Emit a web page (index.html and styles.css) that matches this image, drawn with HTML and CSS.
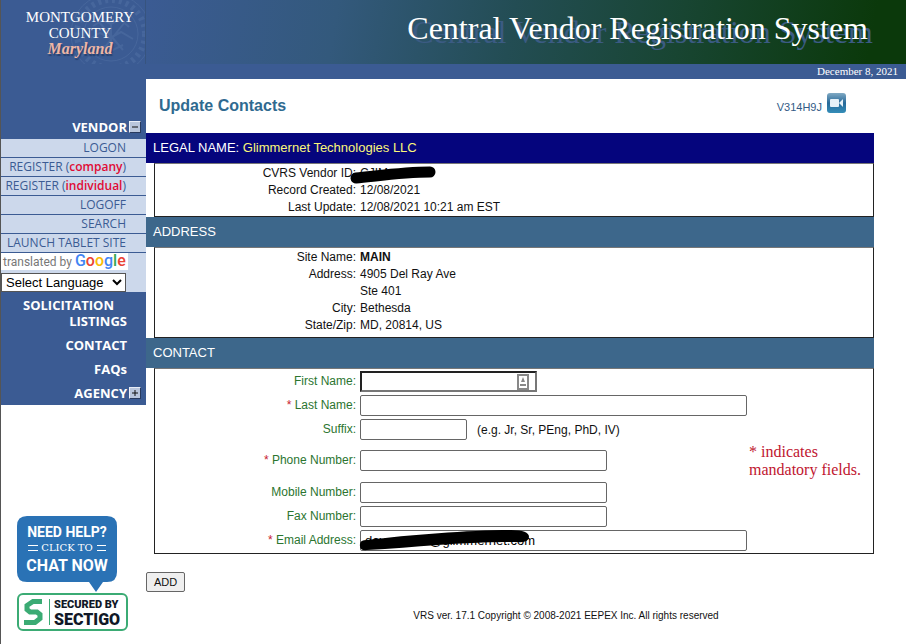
FILE: index.html
```html
<!DOCTYPE html>
<html lang="en">
<head>
    <meta charset="UTF-8">
    <meta name="viewport" content="width=device-width, initial-scale=1.0">
    <title>Central Vendor Registration System</title>
    <link rel="stylesheet" href="styles.css">
</head>
<body>

<div class="page">
    <aside class="sidebar">
        <div class="county">
            <svg class="seal" viewBox="0 0 76 64" aria-hidden="true">
                <g fill="none" stroke="#7594c2">
                    <circle cx="42" cy="34" r="40" stroke-width="1"/>
                    <circle cx="42" cy="34" r="34" stroke-width="6" stroke-dasharray="3 4"/>
                    <circle cx="42" cy="34" r="27" stroke-width="1"/>
                    <path d="M24 26l10-6 8 4 9-5 9 8M22 38l9-5 10 5 11-6 12 7M27 50l9-4 8 4 10-5M42 18v38M30 22l24 28M56 22L32 52" stroke-width="2"/>
                </g>
            </svg>
            <p class="county-name">MONTGOMERY<br>COUNTY<br><em>Maryland</em></p>
        </div>
        <nav>
            <ul class="menu">
                <li class="vendor"><a href="#">VENDOR</a><button type="button" class="toggle" aria-label="Collapse vendor menu"><svg viewBox="0 0 10 10"><path d="M2 5h6"/></svg></button></li>
            </ul>
            <ul class="submenu">
                <li><a href="#">LOGON</a></li>
                <li><a href="#">REGISTER (<b>company</b>)</a></li>
                <li><a href="#">REGISTER (<b>individual</b>)</a></li>
                <li><a href="#">LOGOFF</a></li>
                <li><a href="#">SEARCH</a></li>
                <li><a href="#">LAUNCH TABLET SITE</a></li>
            </ul>
            <div class="translate">
                <p>translated by <span class="google"><i class="blue">G</i><i class="red">o</i><i class="yellow">o</i><i class="blue">g</i><i class="green">l</i><i class="red">e</i></span></p>
                <select aria-label="Select Language">
                    <option>Select Language</option>
                </select>
            </div>
            <ul class="menu">
                <li><a href="#"><span class="shifted">SOLICITATION</span><br>LISTINGS</a></li>
                <li><a href="#">CONTACT</a></li>
                <li><a href="#">FAQs</a></li>
                <li><a href="#">AGENCY</a><button type="button" class="toggle" aria-label="Expand agency menu"><svg viewBox="0 0 10 10"><path d="M2 5h6M5 2v6"/></svg></button></li>
            </ul>
        </nav>
        <div class="badges">
            <a href="#" aria-label="Chat now">
                <svg width="100" height="76" viewBox="0 0 100 76">
                    <path d="M10 0h80q10 0 10 10v46q0 10-10 10h-4l-7 10-7-10H10q-10 0-10-10V10Q0 0 10 0z" fill="#2a72b5"/>
                    <g fill="#fff" text-anchor="middle">
                        <text class="chat-top" x="50" y="21">NEED HELP?</text>
                        <text class="chat-mid" x="50" y="35">CLICK TO</text>
                        <text class="chat-main" x="50" y="55">CHAT NOW</text>
                    </g>
                    <path d="M11 29.500h10M11 34.500h10M80 29.500h9M80 34.500h9" stroke="#fff"/>
                </svg>
            </a>
            <a href="#" aria-label="Secured by Sectigo">
                <svg width="111" height="38" viewBox="0 0 111 38">
                    <rect x="1" y="1" width="109" height="36" rx="5" fill="#fff" stroke="#3bab74" stroke-width="2"/>
                    <path d="M25 8.500h-9l-6 4v4l3 2.500h7l3 2.500v4l-5 4H7" fill="none" stroke="#3bab74" stroke-width="5"/>
                    <path d="M32.500 6v26" stroke="#3bab74"/>
                    <g fill="#111827">
                        <text class="seal-top" x="37" y="15">SECURED BY</text>
                        <text class="seal-main" x="37" y="32">SECTIGO</text>
                    </g>
                </svg>
            </a>
        </div>
    </aside>

    <div class="content">
        <header>
            <div class="banner">Central Vendor Registration System</div>
            <div class="date">December 8, 2021</div>
        </header>

        <main>
            <div class="title-row">
                <h1>Update Contacts</h1>
                <a href="#" class="help">V314H9J
                    <svg width="19" height="20" viewBox="0 0 19 20" aria-hidden="true">
                        <defs>
                            <linearGradient id="cam" x1="0" y1="0" x2="0" y2="1">
                                <stop offset="0" stop-color="#80a9c3"/>
                                <stop offset="0.500" stop-color="#276999"/>
                                <stop offset="1" stop-color="#348db8"/>
                            </linearGradient>
                        </defs>
                        <rect width="19" height="20" rx="3" fill="url(#cam)"/>
                        <rect x="3" y="6" width="9" height="8" rx="1" fill="#e6f1f8"/>
                        <path d="M12 10l4-4v8z" fill="#e6f1f8"/>
                    </svg>
                </a>
            </div>

            <h2 class="legal">LEGAL NAME: <span>Glimmernet Technologies LLC</span></h2>
            <dl class="box details">
                <dt>CVRS Vendor ID:</dt>
                <dd class="masked">CJIM
                    <svg class="mark mark-id" width="88" height="20" viewBox="0 0 88 20" aria-hidden="true"><path d="M7 13C28 11 55 7 81 7" fill="none" stroke="#000" stroke-width="11" stroke-linecap="round"/></svg>
                </dd>
                <dt>Record Created:</dt><dd>12/08/2021</dd>
                <dt>Last Update:</dt><dd>12/08/2021 10:21 am EST</dd>
            </dl>

            <h2>ADDRESS</h2>
            <dl class="box details address">
                <dt>Site Name:</dt><dd><b>MAIN</b></dd>
                <dt>Address:</dt><dd>4905 Del Ray Ave<br>Ste 401</dd>
                <dt>City:</dt><dd>Bethesda</dd>
                <dt>State/Zip:</dt><dd>MD, 20814, US</dd>
            </dl>

            <h2>CONTACT</h2>
            <form id="contact" class="box contact">
                <div class="fields">
                    <div class="row">
                        <label for="first">First Name:</label>
                        <div class="masked">
                            <input type="text" id="first" class="first">
                            <svg class="autofill" width="12" height="16" viewBox="0 0 12 16" aria-hidden="true"><path d="M1 1h10v14H1z" fill="#fff" stroke="#888" stroke-width="2"/><path d="M6 3l2 5H4zM3 10h6v2H3z" fill="#888"/></svg>
                        </div>
                    </div>
                    <div class="row">
                        <label for="last"><i>*</i> Last Name:</label>
                        <input type="text" id="last" class="long">
                    </div>
                    <div class="row">
                        <label for="suffix">Suffix:</label>
                        <div><input type="text" id="suffix" class="short"><span class="hint">(e.g. Jr, Sr, PEng, PhD, IV)</span></div>
                    </div>
                    <div class="row phone">
                        <label for="phone"><i>*</i> Phone Number:</label>
                        <input type="tel" id="phone" class="medium">
                    </div>
                    <div class="row">
                        <label for="mobile">Mobile Number:</label>
                        <input type="tel" id="mobile" class="medium">
                    </div>
                    <div class="row">
                        <label for="fax">Fax Number:</label>
                        <input type="tel" id="fax" class="medium">
                    </div>
                    <div class="row">
                        <label for="email"><i>*</i> Email Address:</label>
                        <div class="masked">
                            <input type="text" id="email" class="long" value="dav            @glimmernet.com">
                            <svg class="mark mark-email" width="172" height="22" viewBox="0 0 172 22" aria-hidden="true"><path d="M1 14Q1 10 8 10C50 5 110 0 152 0Q170 0 170 7Q170 13 158 12C110 11 60 17 8 20Q0 21 1 14z"/></svg>
                        </div>
                    </div>
                </div>
                <p class="mandatory">* indicates mandatory fields.</p>
            </form>

            <button type="submit" form="contact" class="add">ADD</button>
        </main>

        <footer>VRS ver. 17.1 Copyright © 2008-2021 EEPEX Inc. All rights reserved</footer>
    </div>
</div>

</body>
</html>
```
FILE: styles.css
```css
* {
    box-sizing: border-box;
}

body {
    margin: 0;
    font-family: Arial, "Liberation Sans", sans-serif;
    font-size: 12px;
    line-height: 17px;
    color: #111;
    background-color: white;
}

h1, h2, p, ul, dl, dd {
    margin: 0;
    padding: 0;
    font-weight: normal;
}

ul {
    list-style: none;
}

a {
    color: inherit;
    text-decoration: none;
}

.page {
    display: grid;
    grid-template-columns: 146px 1fr;
    min-height: 100vh;
    padding-right: 2px;
}

/* Sidebar */
.sidebar {
    border-left: 1px solid #555;
    font-family: "Trebuchet MS", "Open Sans", sans-serif;
}

.county {
    position: relative;
    height: 64px;
    padding-top: 9px;
    background-color: #3b5b93;
    border-right: 1px solid #37547f;
}

.seal {
    position: absolute;
    right: 0;
    top: 0;
    width: 76px;
    height: 64px;
    opacity: 0.2;
}

.county-name {
    position: relative;
    padding-left: 14px;
    font-family: "Liberation Serif", serif;
    font-size: 15px;
    line-height: 16px;
    text-align: center;
    color: white;
}

.county-name em {
    font-size: 16px;
    font-weight: bold;
    color: #eeb6a5;
    text-shadow: 1px 2px 1px #26406e;
}

.menu {
    padding: 5px 3px 4px 0;
    background-color: #3b5b93;
    color: white;
    font-size: 13px;
    font-weight: bold;
    line-height: 16px;
}

.menu li {
    display: flex;
    justify-content: flex-end;
    align-items: center;
    padding-right: 16px;
    margin-bottom: 8px;
    text-align: right;
}

.menu li:last-child {
    margin-bottom: 0;
}

.menu li:has(.toggle) {
    padding-right: 2px;
}

.menu .vendor {
    padding-top: 50px;
}

.shifted {
    padding-right: 13px;
}

.toggle {
    width: 12px;
    height: 12px;
    margin-left: 2px;
    padding: 0;
    border: 1px solid #e8edf8;
    border-right-color: #283a5e;
    border-bottom-color: #283a5e;
    background-color: #b9c6dd;
}

.toggle svg {
    display: block;
    width: 10px;
    height: 10px;
    stroke: #111;
    stroke-width: 1;
}

.submenu {
    background-color: #ccd8eb;
    color: #3b5b93;
}

.submenu li {
    height: 19px;
    padding-right: 20px;
    border-bottom: 1px solid #3b5b93;
    line-height: 18px;
    text-align: right;
    white-space: nowrap;
}

.submenu b {
    font-weight: 600;
    color: #e00b35;
}

.translate {
    background-color: #ccd8eb;
}

.translate p {
    width: 127px;
    height: 17px;
    margin-bottom: 3px;
    padding-left: 2px;
    background-color: white;
    color: #777;
    font-family: Roboto, sans-serif;
    white-space: nowrap;
}

.google {
    font-size: 16px;
    font-weight: 500;
    line-height: 16px;
}

.google i {
    font-style: normal;
}

.blue { color: #4285f4; }
.red { color: #ea4335; }
.yellow { color: #fbbc05; }
.green { color: #34a853; }

.translate select {
    display: block;
    width: 125px;
    height: 19px;
    padding: 0;
    border: 1px solid #555;
    border-radius: 0;
    background-color: white;
    color: black;
    font-family: Arial, "Liberation Sans", sans-serif;
    font-size: 13px;
}

.badges {
    display: flex;
    flex-direction: column;
    gap: 1px;
    padding: 111px 0 0 16px;
}

.badges svg {
    display: block;
}

.chat-top {
    font: bold 14px Roboto, sans-serif;
}

.chat-mid {
    font: 10px "DejaVu Serif", serif;
}

.chat-main {
    font: bold 16px Roboto, sans-serif;
}

.seal-top {
    font: 900 11px Roboto, sans-serif;
}

.seal-main {
    font: 900 16px Roboto, sans-serif;
}

/* Header */
.banner {
    height: 64px;
    padding-right: 38px;
    background: linear-gradient(100deg, #3b5b93 0%, #33597c 25%, #234d54 48%, #184532 70%, #0b390b 95%);
    color: white;
    font-family: "Liberation Serif", serif;
    font-size: 32px;
    line-height: 56px;
    text-align: right;
    text-shadow: 5px 4px 0 #3b5b83;
    white-space: nowrap;
}

.date {
    height: 15px;
    padding-right: 8px;
    background-color: #3b5b93;
    color: white;
    font-family: "Liberation Serif", serif;
    font-size: 11px;
    line-height: 15px;
    text-align: right;
}

/* Main content */
main {
    padding-right: 32px;
}

.title-row {
    display: flex;
    justify-content: space-between;
    align-items: center;
    height: 54px;
    padding: 0 28px 2px 13px;
}

h1 {
    font-size: 16px;
    font-weight: bold;
    color: #2f6a90;
}

.help {
    display: flex;
    align-items: center;
    gap: 5px;
    padding-top: 4px;
    font-size: 11px;
    color: #335b86;
}

.help svg {
    margin-bottom: 8px;
}

h2 {
    height: 30px;
    padding-left: 7px;
    background-color: #3d678b;
    color: white;
    font-size: 13px;
    line-height: 30px;
}

h2.legal {
    background-color: #05057d;
}

.legal span {
    color: #fbf77a;
}

.box {
    margin-left: 8px;
    border: 1px solid #222;
    border-top-color: #777;
}

.details {
    display: grid;
    grid-template-columns: 201px 1fr;
    column-gap: 4px;
    padding-top: 1px;
}

.details dt {
    text-align: right;
}

.address {
    padding-bottom: 3px;
}

.masked {
    position: relative;
}

.mark {
    position: absolute;
    pointer-events: none;
}

.mark-id {
    left: -11px;
    top: 0;
}

.mark-email {
    left: -1px;
    top: 0;
}

/* Contact form */
.contact {
    display: flex;
    align-items: center;
    justify-content: space-between;
    padding-bottom: 1px;
}

.row {
    display: grid;
    grid-template-columns: 201px 1fr;
    column-gap: 4px;
    align-items: center;
    height: 24px;
}

.row.phone {
    height: 39px;
}

.row label {
    text-align: right;
    color: #2b752f;
}

.row label i {
    font-style: normal;
    color: #c8202f;
}

.row input {
    height: 21px;
    padding: 1px 4px;
    border: 1px solid #666;
    border-radius: 2px;
    font-family: inherit;
    font-size: 13px;
}

.row .masked input {
    display: block;
}

.row .first {
    width: 177px;
    border: 2px solid #777;
    border-top-color: #222;
    border-left-color: #222;
    border-radius: 0;
}

.long { width: 387px; }
.medium { width: 247px; }
.short { width: 107px; }

.autofill {
    position: absolute;
    left: 157px;
    top: 3px;
}

.hint {
    margin-left: 10px;
}

.mandatory {
    width: 124px;
    font-family: "Liberation Serif", serif;
    font-size: 16px;
    line-height: 18px;
    color: #c01530;
}

.add {
    display: block;
    width: 39px;
    height: 20px;
    margin-top: 18px;
    padding: 0;
    border: 1px solid #666;
    border-radius: 2px;
    background-color: #efefef;
    color: #111;
    font-family: inherit;
    font-size: 11px;
}

footer {
    padding: 15px 0 0 80px;
    font-size: 10px;
    text-align: center;
    color: #111;
}
```
